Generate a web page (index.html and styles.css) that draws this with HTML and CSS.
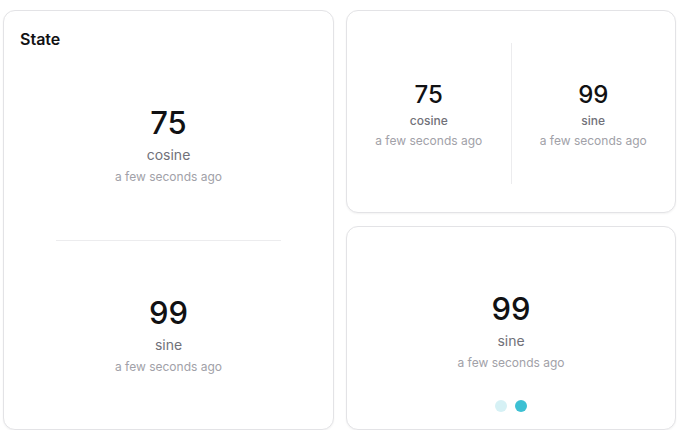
FILE: index.html
```html
<!DOCTYPE html>
<html lang="en">
<head>
<meta charset="utf-8">
<title>State</title>
<link rel="stylesheet" href="styles.css">
</head>
<body>
<div class="board">
  <section class="card card-tall">
    <h2 class="card-title">State</h2>
    <div class="stack">
      <div class="stat">
        <div class="stat-value">75</div>
        <div class="stat-label">cosine</div>
        <div class="stat-time">a few seconds ago</div>
      </div>
      <div class="hdivider"></div>
      <div class="stat">
        <div class="stat-value">99</div>
        <div class="stat-label">sine</div>
        <div class="stat-time">a few seconds ago</div>
      </div>
    </div>
  </section>

  <section class="card card-row">
    <div class="stat stat-small">
      <div class="stat-value">75</div>
      <div class="stat-label">cosine</div>
      <div class="stat-time">a few seconds ago</div>
    </div>
    <div class="vdivider"></div>
    <div class="stat stat-small">
      <div class="stat-value">99</div>
      <div class="stat-label">sine</div>
      <div class="stat-time">a few seconds ago</div>
    </div>
  </section>

  <section class="card card-carousel">
    <div class="stat">
      <div class="stat-value">99</div>
      <div class="stat-label">sine</div>
      <div class="stat-time">a few seconds ago</div>
    </div>
    <div class="dots">
      <span class="dot"></span>
      <span class="dot dot-active"></span>
    </div>
  </section>
</div>
</body>
</html>
```

FILE: styles.css
```css
* { box-sizing: border-box; }

html, body {
  margin: 0;
  padding: 0;
  background: #ffffff;
  font-family: Inter, "Noto Sans", "Liberation Sans", sans-serif;
  color: #111113;
}

.board {
  display: grid;
  grid-template-columns: 331px 330px;
  grid-template-rows: 203px 204px;
  gap: 13px 12px;
  padding: 10px 0 0 3px;
}

.card {
  background: #ffffff;
  border: 1px solid #e3e3e6;
  border-radius: 12px;
  box-shadow: 0 1px 2px rgba(0, 0, 0, 0.05);
}

.card-tall {
  grid-row: 1 / span 2;
  display: flex;
  flex-direction: column;
}

.card-title {
  margin: 0;
  height: 40px;
  padding: 18px 16px 0;
  font-size: 16px;
  line-height: 20px;
  font-weight: 600;
  color: #111113;
}

.stack {
  flex: 1;
  display: flex;
  flex-direction: column;
}

.stack .stat {
  flex: 1;
}

.hdivider {
  height: 1px;
  width: 225px;
  margin: 0 auto;
  background: #ececee;
}

.stat {
  display: flex;
  flex-direction: column;
  align-items: center;
  justify-content: center;
  text-align: center;
}

.stat-value {
  font-size: 31px;
  line-height: 38px;
  font-weight: 500;
  color: #111113;
}

.stat-label {
  margin-top: 3px;
  font-size: 14px;
  line-height: 20px;
  color: #717179;
}

.stat-time {
  margin-top: 3px;
  font-size: 12px;
  line-height: 18px;
  color: #a1a1a8;
}

.card-row {
  display: flex;
  align-items: stretch;
}

.stat-small {
  flex: 1;
  padding-top: 7px;
}

.stat-small .stat-value {
  font-size: 24px;
  line-height: 28px;
}

.stat-small .stat-label {
  font-size: 12px;
  line-height: 18px;
  font-weight: 500;
}

.stat-small .stat-time {
  margin-top: 2px;
}

.vdivider {
  width: 1px;
  margin: 32px 0 28px;
  background: #ececee;
}

.card-carousel {
  display: flex;
  flex-direction: column;
}

.card-carousel .stat {
  flex: 1;
  padding-top: 34px;
}

.dots {
  display: flex;
  justify-content: center;
  gap: 8px;
  padding-bottom: 17px;
}

.dot {
  width: 12px;
  height: 12px;
  border-radius: 50%;
  background: #d6f1f5;
}

.dot-active {
  background: #3cc0d3;
}
```
